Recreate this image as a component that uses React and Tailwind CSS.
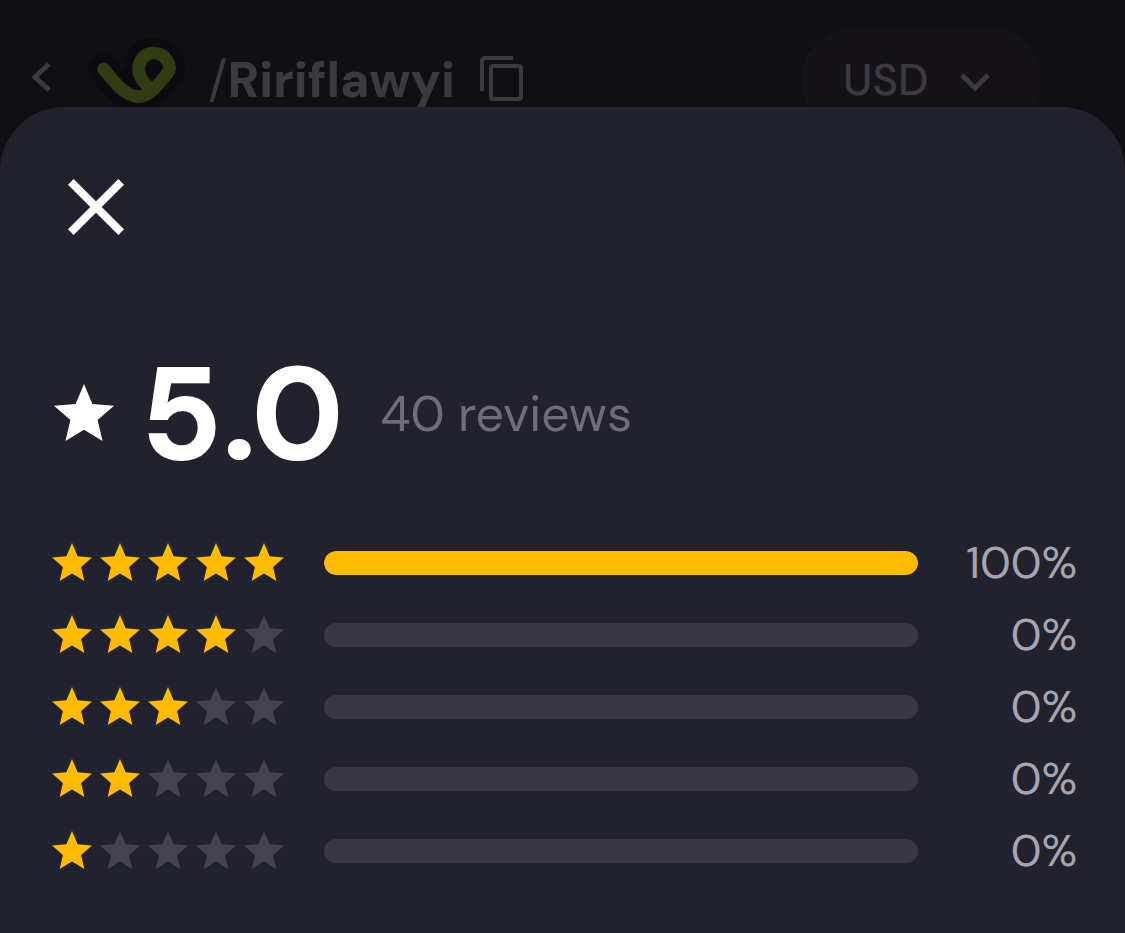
import React, { useState } from 'react';

const ratings = [
  { stars: 5, percent: 100 },
  { stars: 4, percent: 0 },
  { stars: 3, percent: 0 },
  { stars: 2, percent: 0 },
  { stars: 1, percent: 0 },
];

function Star({ className }) {
  return (
    <svg viewBox="0 0 24 24" fill="currentColor" aria-hidden="true" className={className}>
      <path d="M12 17.27 18.18 21l-1.64-7.03L22 9.24l-7.19-.61L12 2 9.19 8.63 2 9.24l5.46 4.73L5.82 21z" />
    </svg>
  );
}

function Logo() {
  const d =
    'M311 147 C340 183 375 230 415 230 C449 230 478 190 505 156 C513 146 508 134 502 123 C494 108 481 99 460 99 C433 99 416 121 416 147 C416 172 432 188 452 208';
  return (
    <svg viewBox="264 36 312 288" fill="none" strokeLinecap="round" strokeLinejoin="round" aria-hidden="true" className="w-[104px] h-24 shrink-0">
      <path d={d} stroke="#0d0b0f" strokeWidth="90" />
      <path d={d} stroke="#303d12" strokeWidth="38" />
    </svg>
  );
}

function Header() {
  const [currency, setCurrency] = useState('USD');

  return (
    <header className="flex items-center h-40 pl-8 pr-[84px] text-[#3c3a3f]">
      <button type="button" aria-label="Back" className="shrink-0 mr-9">
        <svg viewBox="0 0 20 36" fill="none" stroke="currentColor" strokeWidth="5" className="w-5 h-9">
          <path d="M17 2 3 15l14 13" />
        </svg>
      </button>
      <Logo />
      <h1 className="ml-4 text-[50px] leading-[64px] font-extrabold whitespace-nowrap">
        <span className="font-normal">/</span>Ririflawyi
      </h1>
      <button type="button" aria-label="Copy link" className="ml-6 shrink-0">
        <svg viewBox="0 0 44 48" fill="none" stroke="currentColor" strokeWidth="4" className="w-11 h-12">
          <path d="M3 35V5a3 3 0 0 1 3-3h28" />
          <rect x="12" y="10" width="30" height="33" rx="2" />
        </svg>
      </button>
      <div className="relative ml-auto w-60 shrink-0">
        <select
          aria-label="Currency"
          value={currency}
          onChange={(e) => setCurrency(e.target.value)}
          className="appearance-none w-full h-[104px] pl-[42px] rounded-full bg-[#151318] text-[44px] font-medium"
        >
          <option>USD</option>
          <option>EUR</option>
        </select>
        <svg viewBox="0 0 30 20" fill="none" stroke="currentColor" strokeWidth="5" aria-hidden="true" className="absolute right-[51px] top-11 w-[30px] h-5 pointer-events-none">
          <path d="m2 3 13 13L28 3" />
        </svg>
      </div>
    </header>
  );
}

function RatingRow({ stars, percent }) {
  return (
    <li className="flex items-center gap-9 h-[72px]">
      <div role="img" aria-label={`${stars} out of 5 stars`} className="flex shrink-0">
        {[1, 2, 3, 4, 5].map((n) => (
          <Star key={n} className={n <= stars ? 'size-12 text-[#ffbb00]' : 'size-12 text-[#444350]'} />
        ))}
      </div>
      <div className="flex-1 h-6 rounded-full bg-[#383742] overflow-hidden">
        <div className="h-full rounded-full bg-[#ffbb00]" style={{ width: `${percent}%` }} />
      </div>
      <span className="w-[123px] shrink-0 text-right text-[45px] leading-[48px] font-normal text-[#a6a5af]">
        {percent}%
      </span>
    </li>
  );
}

export default function App() {
  return (
    <div className="flex flex-col min-h-screen bg-[#100f13] font-['DM_Sans','Inter',sans-serif]">
      <Header />

      {/* Reviews sheet, slides up over the header */}
      <section role="dialog" aria-label="Reviews" className="relative z-10 flex-1 -mt-[53px] px-12 pt-[52px] pb-10 rounded-t-[64px] bg-[#22212e]">
        <button type="button" aria-label="Close" className="block text-white">
          <svg viewBox="0 0 24 24" fill="none" stroke="currentColor" strokeWidth="2" className="size-24">
            <path d="M5.7 5.7l12.6 12.6M18.3 5.7L5.7 18.3" />
          </svg>
        </button>

        <div className="flex items-center h-32 mt-[95px]">
          <Star className="size-[72px] shrink-0 text-white" />
          <span className="ml-5 text-[132px] leading-[128px] font-extrabold text-white">5.0</span>
          <span className="ml-9 text-[50px] leading-[64px] font-normal text-[#6e6d79]">40 reviews</span>
        </div>

        <ul className="mt-[49px]">
          {ratings.map((r) => (
            <RatingRow key={r.stars} stars={r.stars} percent={r.percent} />
          ))}
        </ul>
      </section>
    </div>
  );
}
